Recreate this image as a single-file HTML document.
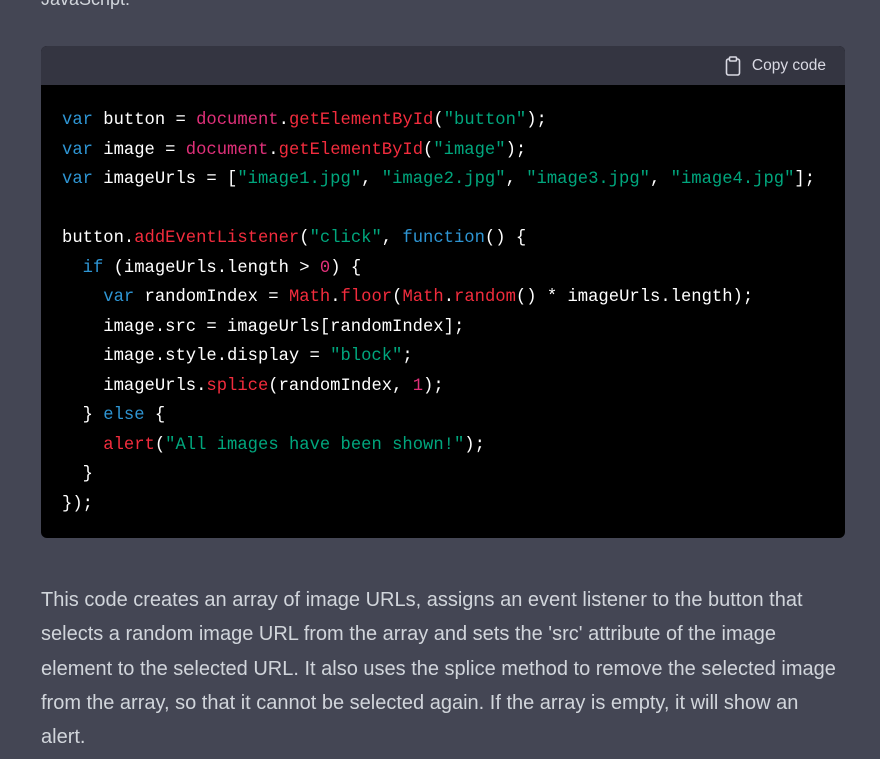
<!DOCTYPE html>
<html><head><meta charset="utf-8"><style>
html,body{margin:0;padding:0;width:880px;height:759px;overflow:hidden;background:#444654;}
.top{position:absolute;left:41px;top:-11px;font:18px "Liberation Sans",sans-serif;color:#d1d5db;}
.block{position:absolute;left:41px;top:46px;width:804px;height:492px;border-radius:6px;overflow:hidden;background:#000;}
.hdr{height:39px;background:#343541;position:relative;}
.copy{position:absolute;right:19px;top:10px;font:15.5px "Liberation Sans",sans-serif;color:#d9d9e3;display:flex;align-items:center;gap:11px;}
pre{margin:0;position:absolute;left:21px;top:60px;font:17.2px/29.5px "Liberation Mono",monospace;color:#fff;}
.k{color:#2e95d3}.d{color:#df3079}.f{color:#f22c3d}.s{color:#00a67d}
.p{position:absolute;left:41px;top:583px;font:20px/34.3px "Liberation Sans",sans-serif;color:#d1d5db;white-space:nowrap;}
</style></head><body>
<div class="top">JavaScript:</div>
<div class="block">
<div class="hdr"><div class="copy"><svg width="16" height="20" viewBox="0 0 16 20" fill="none" stroke="#d9d9e3" stroke-width="1.6"><rect x="1.5" y="3" width="13" height="16" rx="2"/><rect x="4.5" y="1" width="7" height="4" rx="1" fill="#343541"/></svg>Copy code</div></div>
<pre><span class="k">var</span> button = <span class="d">document</span>.<span class="f">getElementById</span>(<span class="s">"button"</span>);
<span class="k">var</span> image = <span class="d">document</span>.<span class="f">getElementById</span>(<span class="s">"image"</span>);
<span class="k">var</span> imageUrls = [<span class="s">"image1.jpg"</span>, <span class="s">"image2.jpg"</span>, <span class="s">"image3.jpg"</span>, <span class="s">"image4.jpg"</span>];

button.<span class="f">addEventListener</span>(<span class="s">"click"</span>, <span class="k">function</span>() {
  <span class="k">if</span> (imageUrls.length &gt; <span class="d">0</span>) {
    <span class="k">var</span> randomIndex = <span class="f">Math</span>.<span class="f">floor</span>(<span class="f">Math</span>.<span class="f">random</span>() * imageUrls.length);
    image.src = imageUrls[randomIndex];
    image.style.display = <span class="s">"block"</span>;
    imageUrls.<span class="f">splice</span>(randomIndex, <span class="d">1</span>);
  } <span class="k">else</span> {
    <span class="f">alert</span>(<span class="s">"All images have been shown!"</span>);
  }
});</pre>
</div>
<div class="p">This code creates an array of image URLs, assigns an event listener to the button that<br>selects a random image URL from the array and sets the 'src' attribute of the image<br>element to the selected URL. It also uses the splice method to remove the selected image<br>from the array, so that it cannot be selected again. If the array is empty, it will show an<br>alert.</div>
</body></html>
